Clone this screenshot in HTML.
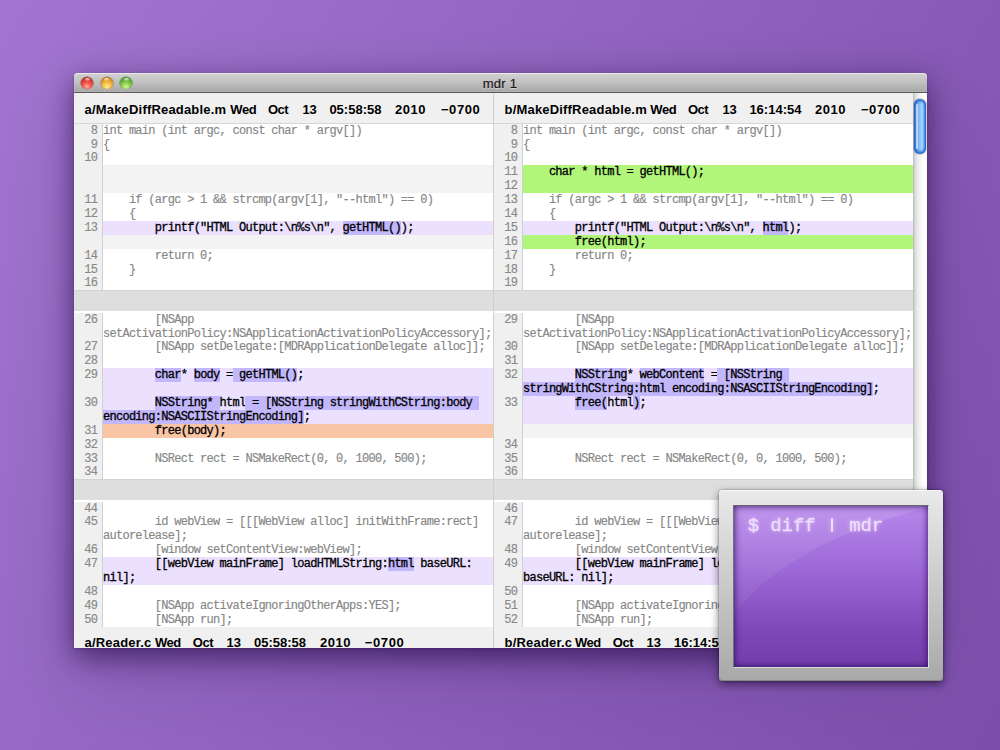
<!DOCTYPE html>
<html><head><meta charset="utf-8"><title>mdr 1</title>
<style>
html,body{margin:0;padding:0}
body{width:1000px;height:750px;overflow:hidden;position:relative;
  background:linear-gradient(120deg,#a276d0 0%,#7c4eaa 100%);
  font-family:"Liberation Sans",sans-serif}
.win{position:absolute;left:74px;top:73px;width:853px;height:575px;overflow:hidden;
  border-radius:4px 4px 0 0;background:#fff}
.shadow{position:absolute;left:74px;top:73px;width:853px;height:575px;border-radius:4px 4px 0 0;
  box-shadow:0 10px 28px rgba(25,0,55,.56),0 1px 3px rgba(25,0,55,.22),0 24px 70px rgba(25,0,55,.16)}
.tb{position:absolute;left:0;top:0;width:853px;height:19px;border-bottom:1px solid #5c5c5c;
  background:linear-gradient(#d2d2d2 0,#c4c4c4 40%,#ababab 92%,#b4b4b4 100%);border-radius:4px 4px 0 0;
  box-shadow:inset 0 1px 0 #e8e8e6}
.tb .title{position:absolute;left:0;width:852px;top:2.5px;text-align:center;font-size:13px;letter-spacing:.3px;line-height:15px;color:#141414;-webkit-text-stroke:.2px;
  text-shadow:0 1px 0 rgba(255,255,255,.45)}
.tl{position:absolute;top:3.5px;width:12px;height:12px;border-radius:50%}
.tl i{position:absolute;left:3.5px;top:1px;width:5px;height:3px;border-radius:50%;background:linear-gradient(rgba(255,255,255,.9),rgba(255,255,255,.15))}
.tl.r{left:7px;background:radial-gradient(circle at 50% 80%,#ffaaa2 0,#f04c42 42%,#c8352c 70%,#9a2820 100%);box-shadow:0 0 0 .5px #8a2a24,0 1px 0 rgba(255,255,255,.5)}
.tl.y{left:26.5px;background:radial-gradient(circle at 50% 80%,#fff08a 0,#f4b63c 42%,#d48a26 70%,#a8641a 100%);box-shadow:0 0 0 .5px #96601e,0 1px 0 rgba(255,255,255,.5)}
.tl.g{left:46px;background:radial-gradient(circle at 50% 80%,#d6f79c 0,#80c646 42%,#5aa030 70%,#3f7c20 100%);box-shadow:0 0 0 .5px #3f7420,0 1px 0 rgba(255,255,255,.5)}
.pane{position:absolute;top:20px;width:419px;height:555px;overflow:hidden;background:#fff}
.pane.l{left:0}
.pane.r{left:420px}
.divider{position:absolute;left:419px;top:20px;width:1px;height:555px;background:#cfcfcf}
.hdr{position:relative;height:29.65px;border-bottom:1px solid #d6d6d6;background:#f0f0f0;
  font-weight:bold;font-size:13px;color:#000;white-space:pre}
.hdr span{position:absolute;top:8.5px;line-height:16px}
.row{position:relative;height:13.9px;white-space:pre;font-family:"Liberation Mono",monospace;
  font-size:12.0px;letter-spacing:-0.7262px;line-height:15.87px;color:#868686;background:#fff;-webkit-text-stroke:.15px}
.row .ln{position:absolute;left:0;top:0;width:23.3px;height:100%;padding-right:4.7px;text-align:right;background:#f0f0f0;border-right:1px solid #d0d0d0;box-sizing:content-box;color:#888;-webkit-text-stroke:.15px}
.row .code{position:absolute;left:29px;top:0;height:100%}
.row.gap{background:#f3f3f3}
.row.chg{background:#ebe1fe;color:#000;-webkit-text-stroke:.3px}
.row.add{background:#b1f67a;color:#000;-webkit-text-stroke:.3px}
.row.del{background:#f8c5a5;color:#000;-webkit-text-stroke:.3px}
.hl{background:#c3b7fb;display:inline-block;height:13.9px;vertical-align:top}
.sep{height:20.6px;margin-bottom:1.7px;background:#dedede;box-shadow:inset 0 1px 0 #d4d4d4}
.sb{position:absolute;left:839px;top:20px;width:14px;height:555px;
  background:linear-gradient(90deg,#b4b4b4 0,#cfcfcf 9%,#e2e2e2 22%,#f2f2f2 45%,#fdfdfd 70%,#ffffff 90%,#f6f6f6 100%)}
.thumb{position:absolute;left:1px;top:6px;width:12px;height:55px;border-radius:6px;
  background:linear-gradient(90deg,#2462d4 0,#4488e6 14%,#72b0f4 32%,#8cc4f8 50%,#a2d6fe 68%,#68a8f0 84%,#2660cc 100%);
  box-shadow:inset 0 3px 3px -1px rgba(24,80,200,.9),inset 0 -3px 3px -1px rgba(24,80,200,.9),0 0 1.5px rgba(0,0,0,.8)}
.thumb i{position:absolute;left:2px;top:5px;width:1.5px;height:45px;background:rgba(255,255,255,.55);border-radius:1px}
.icon{position:absolute;left:719px;top:490px;width:224px;height:191px;border-radius:4px;
  background:linear-gradient(#eaeaea 0,#d0d0d0 40%,#a8a8a8 100%);
  box-shadow:0 3px 8px rgba(10,0,20,.55),0 0 2px rgba(10,0,20,.4),inset 0 1px 0 #f6f6f6,inset 0 -1px 0 #868686}
.screen{position:absolute;left:14px;top:15px;width:196px;height:163px;box-sizing:border-box;overflow:hidden;
  border:1px solid;border-color:#686868 #dcdcdc #dcdcdc #707070;
  background:linear-gradient(#b888ec 0,#9c68d6 40%,#7c46b6 80%,#733eaa 100%)}
.screen:after{content:"";position:absolute;left:0;top:0;right:0;bottom:0;box-shadow:inset 0 0 7px rgba(40,5,90,.95)}
.screen svg{position:absolute;left:0;top:0}
.prompt{position:absolute;left:13.8px;top:7px;font-family:"Liberation Mono",monospace;font-size:18.8px;line-height:26px;white-space:pre;
  color:#eedfff;text-shadow:0 0 4px rgba(255,240,255,.6);-webkit-text-stroke:.3px}
.pipe{display:inline-block;width:11.28px;height:15px;vertical-align:baseline;position:relative}
.pipe:after{content:"";position:absolute;left:4.1px;top:2px;width:2.2px;height:13.5px;border-radius:1px;background:#eedfff;box-shadow:0 0 4px rgba(255,240,255,.6)}

</style></head>
<body>
<div class="shadow"></div>
<div class="win">
  <div class="tb">
    <div class="tl r"><i></i></div><div class="tl y"><i></i></div><div class="tl g"><i></i></div>
    <div class="title">mdr 1</div>
  </div>
  <div class="pane l">
    <div class="hdr"><span style="left:10.6px;letter-spacing:0.18px">a/MakeDiffReadable.m</span><span style="left:156.3px;letter-spacing:-0.45px">Wed</span><span style="left:194px;letter-spacing:-0.5px">Oct</span><span style="left:228.4px">13</span><span style="left:255.4px">05:58:58</span><span style="left:321px;letter-spacing:0.55px">2010</span><span style="left:366.9px;letter-spacing:0.6px">−0700</span></div>
<div class="row ctx"><span class="ln">8</span><span class="code">int main (int argc, const char * argv[])</span></div>
<div class="row ctx"><span class="ln">9</span><span class="code">{</span></div>
<div class="row ctx"><span class="ln">10</span><span class="code"></span></div>
<div class="row gap"><span class="ln"></span><span class="code"></span></div>
<div class="row gap"><span class="ln"></span><span class="code"></span></div>
<div class="row ctx"><span class="ln">11</span><span class="code">    if (argc &gt; 1 &amp;&amp; strcmp(argv[1], "--html") == 0)</span></div>
<div class="row ctx"><span class="ln">12</span><span class="code">    {</span></div>
<div class="row chg"><span class="ln">13</span><span class="code">        printf("HTML Output:\n%s\n", <span class="hl">getHTML()</span>);</span></div>
<div class="row gap"><span class="ln"></span><span class="code"></span></div>
<div class="row ctx"><span class="ln">14</span><span class="code">        return 0;</span></div>
<div class="row ctx"><span class="ln">15</span><span class="code">    }</span></div>
<div class="row ctx"><span class="ln">16</span><span class="code"></span></div>
<div class="sep"></div>
<div class="row ctx"><span class="ln">26</span><span class="code">        [NSApp </span></div>
<div class="row ctx"><span class="ln"></span><span class="code">setActivationPolicy:NSApplicationActivationPolicyAccessory];</span></div>
<div class="row ctx"><span class="ln">27</span><span class="code">        [NSApp setDelegate:[MDRApplicationDelegate alloc]];</span></div>
<div class="row ctx"><span class="ln">28</span><span class="code"></span></div>
<div class="row chg"><span class="ln">29</span><span class="code">        <span class="hl">char</span>* <span class="hl">body</span> =<span class="hl"> getHTML()</span>;</span></div>
<div class="row chg"><span class="ln"></span><span class="code"></span></div>
<div class="row chg"><span class="ln">30</span><span class="code">        <span class="hl">NSString* </span>html<span class="hl"> = [NSString stringWithCString:body </span></span></div>
<div class="row chg"><span class="ln"></span><span class="code"><span class="hl">encoding:NSASCIIStringEncoding]</span>;</span></div>
<div class="row del"><span class="ln">31</span><span class="code">        free(body);</span></div>
<div class="row ctx"><span class="ln">32</span><span class="code"></span></div>
<div class="row ctx"><span class="ln">33</span><span class="code">        NSRect rect = NSMakeRect(0, 0, 1000, 500);</span></div>
<div class="row ctx"><span class="ln">34</span><span class="code"></span></div>
<div class="sep"></div>
<div class="row ctx"><span class="ln">44</span><span class="code"></span></div>
<div class="row ctx"><span class="ln">45</span><span class="code">        id webView = [[[WebView alloc] initWithFrame:rect] </span></div>
<div class="row ctx"><span class="ln"></span><span class="code">autorelease];</span></div>
<div class="row ctx"><span class="ln">46</span><span class="code">        [window setContentView:webView];</span></div>
<div class="row chg"><span class="ln">47</span><span class="code">        [[webView mainFrame] loadHTMLString:<span class="hl">html</span> baseURL:</span></div>
<div class="row chg"><span class="ln"></span><span class="code">nil];</span></div>
<div class="row ctx"><span class="ln">48</span><span class="code"></span></div>
<div class="row ctx"><span class="ln">49</span><span class="code">        [NSApp activateIgnoringOtherApps:YES];</span></div>
<div class="row ctx"><span class="ln">50</span><span class="code">        [NSApp run];</span></div>
    <div class="hdr"><span style="left:10.6px;letter-spacing:0.18px">a/Reader.c</span><span style="left:81px;letter-spacing:-0.45px">Wed</span><span style="left:118.8px;letter-spacing:-0.5px">Oct</span><span style="left:152.6px">13</span><span style="left:180px">05:58:58</span><span style="left:246px;letter-spacing:0.55px">2010</span><span style="left:290.8px;letter-spacing:0.6px">−0700</span></div>
  </div>
  <div class="divider"></div>
  <div class="pane r">
    <div class="hdr"><span style="left:10.6px;letter-spacing:0.18px">b/MakeDiffReadable.m</span><span style="left:156.3px;letter-spacing:-0.45px">Wed</span><span style="left:194px;letter-spacing:-0.5px">Oct</span><span style="left:228.4px">13</span><span style="left:255.4px">16:14:54</span><span style="left:321px;letter-spacing:0.55px">2010</span><span style="left:366.9px;letter-spacing:0.6px">−0700</span></div>
<div class="row ctx"><span class="ln">8</span><span class="code">int main (int argc, const char * argv[])</span></div>
<div class="row ctx"><span class="ln">9</span><span class="code">{</span></div>
<div class="row ctx"><span class="ln">10</span><span class="code"></span></div>
<div class="row add"><span class="ln">11</span><span class="code">    char * html = getHTML();</span></div>
<div class="row add"><span class="ln">12</span><span class="code"></span></div>
<div class="row ctx"><span class="ln">13</span><span class="code">    if (argc &gt; 1 &amp;&amp; strcmp(argv[1], "--html") == 0)</span></div>
<div class="row ctx"><span class="ln">14</span><span class="code">    {</span></div>
<div class="row chg"><span class="ln">15</span><span class="code">        printf("HTML Output:\n%s\n", <span class="hl">html</span>);</span></div>
<div class="row add"><span class="ln">16</span><span class="code">        free(html);</span></div>
<div class="row ctx"><span class="ln">17</span><span class="code">        return 0;</span></div>
<div class="row ctx"><span class="ln">18</span><span class="code">    }</span></div>
<div class="row ctx"><span class="ln">19</span><span class="code"></span></div>
<div class="sep"></div>
<div class="row ctx"><span class="ln">29</span><span class="code">        [NSApp </span></div>
<div class="row ctx"><span class="ln"></span><span class="code">setActivationPolicy:NSApplicationActivationPolicyAccessory];</span></div>
<div class="row ctx"><span class="ln">30</span><span class="code">        [NSApp setDelegate:[MDRApplicationDelegate alloc]];</span></div>
<div class="row ctx"><span class="ln">31</span><span class="code"></span></div>
<div class="row chg"><span class="ln">32</span><span class="code">        <span class="hl">NSString</span>* <span class="hl">webContent</span> =<span class="hl"> [NSString </span></span></div>
<div class="row chg"><span class="ln"></span><span class="code"><span class="hl">stringWithCString:html encoding:NSASCIIStringEncoding]</span>;</span></div>
<div class="row chg"><span class="ln">33</span><span class="code">        <span class="hl">free(</span>html<span class="hl">)</span>;</span></div>
<div class="row chg"><span class="ln"></span><span class="code"></span></div>
<div class="row gap"><span class="ln"></span><span class="code"></span></div>
<div class="row ctx"><span class="ln">34</span><span class="code"></span></div>
<div class="row ctx"><span class="ln">35</span><span class="code">        NSRect rect = NSMakeRect(0, 0, 1000, 500);</span></div>
<div class="row ctx"><span class="ln">36</span><span class="code"></span></div>
<div class="sep"></div>
<div class="row ctx"><span class="ln">46</span><span class="code"></span></div>
<div class="row ctx"><span class="ln">47</span><span class="code">        id webView = [[[WebView alloc] initWithFrame:rect] </span></div>
<div class="row ctx"><span class="ln"></span><span class="code">autorelease];</span></div>
<div class="row ctx"><span class="ln">48</span><span class="code">        [window setContentView:webView];</span></div>
<div class="row chg"><span class="ln">49</span><span class="code">        [[webView mainFrame] loadHTMLString:<span class="hl">html</span> </span></div>
<div class="row chg"><span class="ln"></span><span class="code">baseURL: nil];</span></div>
<div class="row ctx"><span class="ln">50</span><span class="code"></span></div>
<div class="row ctx"><span class="ln">51</span><span class="code">        [NSApp activateIgnoringOtherApps:YES];</span></div>
<div class="row ctx"><span class="ln">52</span><span class="code">        [NSApp run];</span></div>
    <div class="hdr"><span style="left:10.6px;letter-spacing:0.18px">b/Reader.c</span><span style="left:81px;letter-spacing:-0.45px">Wed</span><span style="left:118.8px;letter-spacing:-0.5px">Oct</span><span style="left:152.6px">13</span><span style="left:180px">16:14:54</span><span style="left:246px;letter-spacing:0.55px">2010</span><span style="left:290.8px;letter-spacing:0.6px">−0700</span></div>
  </div>
  <div class="sb"><div class="thumb"><i></i></div></div>
</div>
<div class="icon">
  <div class="screen">
    <svg width="194" height="161" viewBox="0 0 194 161"><defs><linearGradient id="gl" x1="0" y1="0" x2="0" y2="1"><stop offset="0" stop-color="#fff" stop-opacity=".11"/><stop offset="1" stop-color="#fff" stop-opacity=".04"/></linearGradient></defs><path d="M0 0H194V2C95 25 25 70 0 110Z" fill="url(#gl)"/></svg>
    <div class="prompt">$ diff <span class="pipe"></span> mdr</div>
  </div>
</div>

</body></html>
